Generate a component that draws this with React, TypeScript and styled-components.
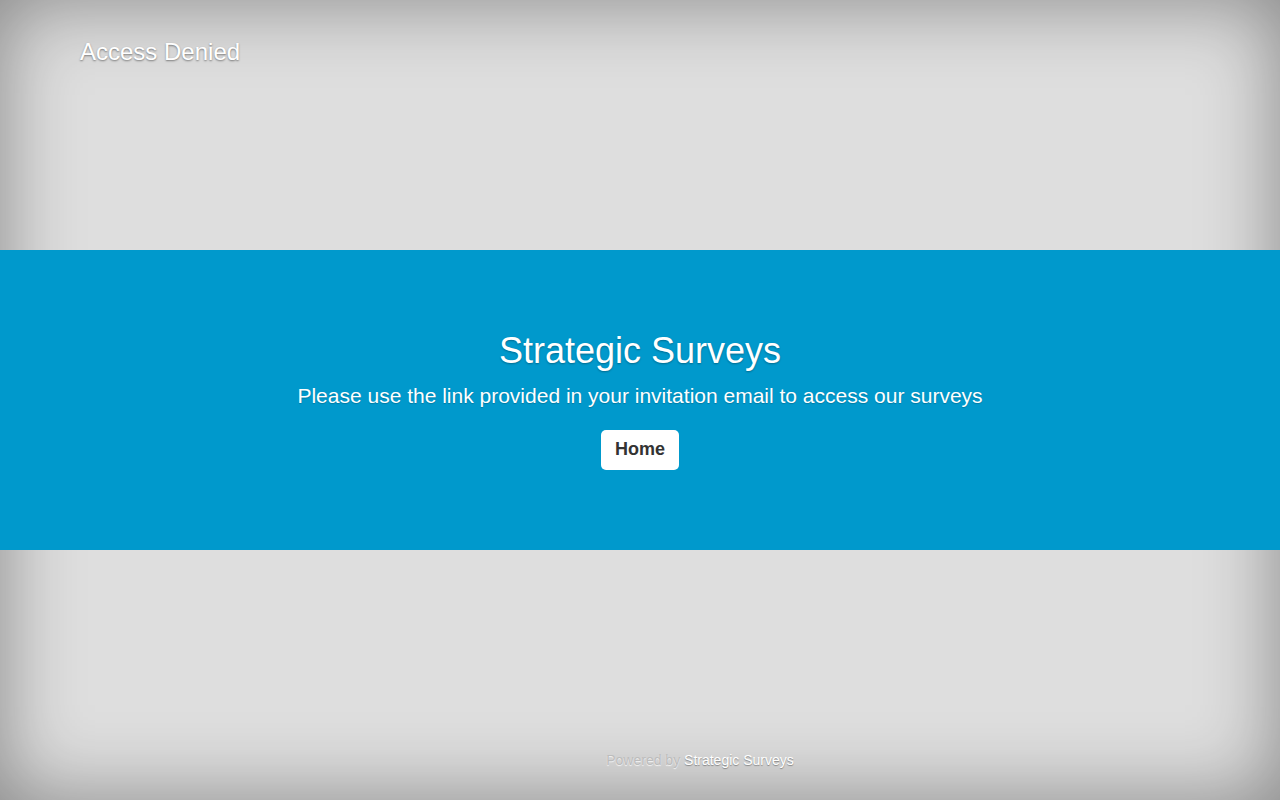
import styled, { createGlobalStyle } from "styled-components";

const GlobalStyle = createGlobalStyle`
  html, body {
    margin: 0;
    padding: 0;
    height: 100%;
  }
  body {
    font-family: "Liberation Sans", Arial, sans-serif;
    background-color: #dedede;
  }
`;

const Page = styled.div`
  min-height: 100vh;
  display: grid;
  grid-template-rows: 1fr 300px 1fr;
  box-shadow: inset 0 0 80px rgba(0, 0, 0, 0.4);
  box-sizing: border-box;
`;

const Header = styled.header`
  padding: 39px 80px 0;
`;

const PageTitle = styled.h1`
  margin: 0;
  font-size: 24px;
  font-weight: 400;
  line-height: 26px;
  color: #fff;
  text-shadow: 0 1px 2px rgba(0, 0, 0, 0.45);
`;

const Band = styled.main`
  background-color: #0099cc;
  color: #fff;
  display: flex;
  flex-direction: column;
  align-items: center;
  justify-content: center;
  text-align: center;
`;

const Title = styled.h2`
  margin: 0;
  font-size: 36px;
  font-weight: 400;
  line-height: 40px;
  text-shadow: 0 1px 2px rgba(0, 0, 0, 0.3);
`;

const Lead = styled.p`
  margin: 13px 0 22px;
  font-size: 21px;
  line-height: 24px;
  text-shadow: 0 1px 1px rgba(0, 0, 0, 0.2);
`;

const Button = styled.a`
  display: inline-flex;
  align-items: center;
  height: 40px;
  padding: 0 14px;
  box-sizing: border-box;
  background: #fff;
  border-radius: 5px;
  color: #333;
  font-size: 18px;
  font-weight: 700;
  text-decoration: none;
`;

const Footer = styled.footer`
  display: flex;
  align-items: flex-end;
  justify-content: center;
  padding: 0 0 32px 120px;
  font-size: 14px;
  line-height: 16px;
`;

const Muted = styled.span`
  color: #bcbcbc;
  text-shadow: 0 1px 1px rgba(255, 255, 255, 0.8);
`;

const Brand = styled.a`
  color: #fff;
  text-decoration: none;
  text-shadow: 0 1px 1px rgba(0, 0, 0, 0.35);
`;

export default function App() {
  return (
    <>
      <GlobalStyle />
      <Page>
        <Header>
          <PageTitle>Access Denied</PageTitle>
        </Header>
        <Band>
          <Title>Strategic Surveys</Title>
          <Lead>Please use the link provided in your invitation email to access our surveys</Lead>
          <Button href="#">Home</Button>
        </Band>
        <Footer>
          <Muted>Powered by&nbsp;</Muted>
          <Brand href="#">Strategic Surveys</Brand>
        </Footer>
      </Page>
    </>
  );
}
